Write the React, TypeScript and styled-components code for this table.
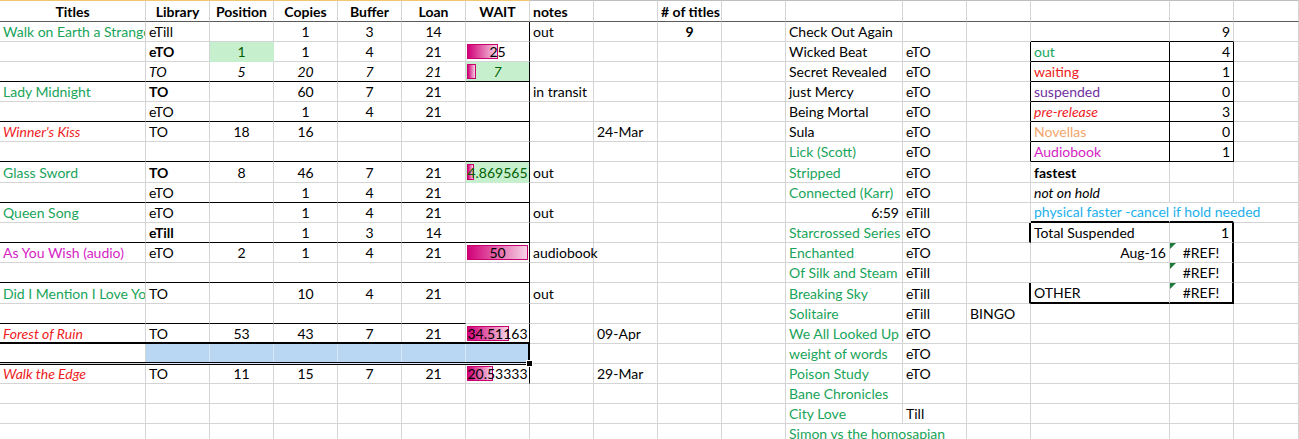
import styled, { createGlobalStyle } from 'styled-components'

const GlobalStyle = createGlobalStyle`
  html, body {
    margin: 0;
    padding: 0;
    background: #fff;
    overflow: hidden;
  }
  body {
    font-family: Lato, 'Open Sans', sans-serif;
    font-size: 14px;
    color: #000;
  }
`

const GRID = '#d4d4d4'
const GREEN = '#19a45a'
const RED = '#ee1c24'
const MAGENTA = '#d424c4'
const PURPLE = '#7030a0'
const ORANGE = '#f3a66a'
const SKY = '#1cb0ec'
const OK_FILL = '#c6efce'
const OK_TEXT = '#006100'
const SELECT_FILL = '#b9d6f2'

const COLS = 'ABCDEFGHIJKLMNOPQ'.split('')
const DEFAULT_ALIGN: Align[] = ['l', 'l', 'c', 'c', 'c', 'c', 'c', 'l', 'l', 'c', 'l', 'l', 'l', 'l', 'l', 'r', 'l']

type Align = 'l' | 'c' | 'r'
type Line = 'thin' | 'thick' | undefined

type Spec = {
  t?: string
  a?: Align
  b?: boolean
  i?: boolean
  c?: string
  fill?: string
  bar?: number
  clip?: boolean
  open?: boolean
  tri?: boolean
}

type RowData = Record<string, Spec | string>

const Sheet = styled.div`
  position: relative;
  width: 1299px;
  display: grid;
  grid-template-columns: 146px repeat(10, 64px) 117px 64px 64px 139px 64px 1fr;
  grid-template-rows: 22px repeat(7, 20px) 21px repeat(5, 20px) 21px repeat(7, 20px);
`

const HeadCell = styled.div<{ $gold: boolean; $align: Align }>`
  box-sizing: border-box;
  display: flex;
  align-items: flex-end;
  justify-content: ${(p) => (p.$align === 'c' ? 'center' : p.$align === 'r' ? 'flex-end' : 'flex-start')};
  padding: 0 3px 1px;
  line-height: 16px;
  font-weight: 700;
  white-space: nowrap;
  border-top: 1px solid ${(p) => (p.$gold ? '#f0c66e' : '#bdbdbd')};
  border-bottom: 1px solid #5a5a5a;
  border-right: 1px solid ${GRID};
`

const lineCss = (line: Line, fallback: string) =>
  line === 'thick' ? '2px solid #000' : line === 'thin' ? '1px solid #000' : `1px solid ${fallback}`

const Cell = styled.div<{
  $align: Align
  $bold?: boolean
  $italic?: boolean
  $color?: string
  $fill?: string
  $clip?: boolean
  $open?: boolean
  $bottom: Line
  $right: Line
  $gridTint: string
}>`
  position: relative;
  box-sizing: border-box;
  min-width: 0;
  display: flex;
  align-items: flex-end;
  justify-content: ${(p) => (p.$align === 'c' ? 'center' : p.$align === 'r' ? 'flex-end' : 'flex-start')};
  padding: 0 3px 1px;
  line-height: 16px;
  white-space: nowrap;
  overflow: ${(p) => (p.$clip ? 'hidden' : 'visible')};
  font-weight: ${(p) => (p.$bold ? 700 : 400)};
  font-style: ${(p) => (p.$italic ? 'italic' : 'normal')};
  color: ${(p) => p.$color || '#000'};
  background: ${(p) => p.$fill || 'transparent'};
  border-bottom: ${(p) => lineCss(p.$bottom, p.$gridTint)};
  border-right: ${(p) => lineCss(p.$right, p.$open ? 'transparent' : p.$gridTint)};
`

const CellText = styled.span`
  position: relative;
  z-index: 1;
`

const Bar = styled.div`
  position: absolute;
  left: 1px;
  top: 2px;
  bottom: 2px;
  box-sizing: border-box;
  border: 1px solid #c8006e;
  background: linear-gradient(to right, #d2007a 0%, #e25ea6 45%, #f6d3e6 100%);
`

const ErrorMark = styled.span`
  position: absolute;
  left: 0;
  top: 0;
  width: 0;
  height: 0;
  border-top: 6px solid #1f7a3a;
  border-right: 6px solid transparent;
`

const Selection = styled.div`
  position: absolute;
  left: -2px;
  top: 342px;
  width: 532px;
  height: 23px;
  box-sizing: border-box;
  border-top: 2px solid #000;
  border-right: 2px solid #000;
  border-bottom: 3px double #000;
  pointer-events: none;
`

const FillHandle = styled.div`
  position: absolute;
  right: -5px;
  bottom: -5px;
  width: 5px;
  height: 5px;
  background: #000;
  border: 1px solid #fff;
`

const headers: { t: string; a: Align }[] = [
  { t: 'Titles', a: 'c' },
  { t: 'Library', a: 'c' },
  { t: 'Position', a: 'c' },
  { t: 'Copies', a: 'c' },
  { t: 'Buffer', a: 'c' },
  { t: 'Loan', a: 'c' },
  { t: 'WAIT', a: 'c' },
  { t: 'notes', a: 'l' },
  { t: '', a: 'l' },
  { t: '# of titles', a: 'l' },
]

const g = (t: string, extra: Spec = {}): Spec => ({ t, c: GREEN, ...extra })
const red = (t: string): Spec => ({ t, c: RED, i: true })

const rows: RowData[] = [
  {
    A: g('Walk on Earth a Strange', { clip: true }), B: 'eTill', D: '1', E: '3', F: '14', H: 'out',
    J: { t: '9', b: true }, L: 'Check Out Again', P: '9',
  },
  {
    B: { t: 'eTO', b: true }, C: { t: '1', fill: OK_FILL, c: OK_TEXT }, D: '1', E: '4', F: '21',
    G: { t: '25', bar: 25 }, L: 'Wicked Beat', M: 'eTO', O: g('out'), P: '4',
  },
  {
    B: { t: 'TO', i: true }, C: { t: '5', i: true }, D: { t: '20', i: true }, E: { t: '7', i: true },
    F: { t: '21', i: true }, G: { t: '7', i: true, bar: 7, fill: OK_FILL, c: OK_TEXT },
    L: 'Secret Revealed', M: 'eTO', O: { t: 'waiting', c: RED }, P: '1',
  },
  {
    A: g('Lady Midnight'), B: { t: 'TO', b: true }, D: '60', E: '7', F: '21', H: 'in transit',
    L: 'just Mercy', M: 'eTO', O: { t: 'suspended', c: PURPLE }, P: '0',
  },
  {
    B: 'eTO', D: '1', E: '4', F: '21', L: 'Being Mortal', M: 'eTO',
    O: { t: 'pre-release', c: RED, i: true }, P: '3',
  },
  {
    A: red("Winner's Kiss"), B: 'TO', C: '18', D: '16', I: '24-Mar', L: 'Sula', M: 'eTO',
    O: { t: 'Novellas', c: ORANGE }, P: '0',
  },
  { L: g('Lick (Scott)'), M: 'eTO', O: { t: 'Audiobook', c: MAGENTA }, P: '1' },
  {
    A: g('Glass Sword'), B: { t: 'TO', b: true }, C: '8', D: '46', E: '7', F: '21',
    G: { t: '4.869565', bar: 4.869565, fill: OK_FILL, c: OK_TEXT }, H: 'out',
    L: g('Stripped'), M: 'eTO', O: { t: 'fastest', b: true },
  },
  {
    B: 'eTO', D: '1', E: '4', F: '21', L: g('Connected (Karr)'), M: 'eTO',
    O: { t: 'not on hold', i: true },
  },
  {
    A: g('Queen Song'), B: 'eTO', D: '1', E: '4', F: '21', H: 'out', L: { t: '6:59', a: 'r' },
    M: 'eTill', O: { t: 'physical faster -cancel if hold needed', c: SKY, open: true }, P: { open: true },
  },
  {
    B: { t: 'eTill', b: true }, D: '1', E: '3', F: '14', L: g('Starcrossed Series'), M: 'eTO',
    O: 'Total Suspended', P: '1',
  },
  {
    A: { t: 'As You Wish (audio)', c: MAGENTA }, B: 'eTO', C: '2', D: '1', E: '4', F: '21',
    G: { t: '50', bar: 50 }, H: 'audiobook', L: g('Enchanted'), M: 'eTO',
    O: { t: 'Aug-16', a: 'r' }, P: { t: '#REF!', a: 'c', tri: true },
  },
  { L: g('Of Silk and Steam'), M: 'eTill', P: { t: '#REF!', a: 'c', tri: true } },
  {
    A: g('Did I Mention I Love You', { clip: true }), B: 'TO', D: '10', E: '4', F: '21', H: 'out',
    L: g('Breaking Sky'), M: 'eTill', O: 'OTHER', P: { t: '#REF!', a: 'c', tri: true },
  },
  { L: g('Solitaire'), M: 'eTill', N: 'BINGO' },
  {
    A: red('Forest of Ruin'), B: 'TO', C: '53', D: '43', E: '7', F: '21',
    G: { t: '34.51163', bar: 34.51163 }, I: '09-Apr', L: g('We All Looked Up'), M: 'eTO',
  },
  {
    B: { fill: SELECT_FILL }, C: { fill: SELECT_FILL }, D: { fill: SELECT_FILL },
    E: { fill: SELECT_FILL }, F: { fill: SELECT_FILL }, G: { fill: SELECT_FILL },
    L: g('weight of words'), M: 'eTO',
  },
  {
    A: red('Walk the Edge'), B: 'TO', C: '11', D: '15', E: '7', F: '21',
    G: { t: '20.53333', bar: 20.53333 }, I: '29-Mar', L: g('Poison Study'), M: 'eTO',
  },
  { L: g('Bane Chronicles') },
  { L: g('City Love'), M: 'Till' },
  { L: g('Simon vs the homosapian', { open: true }) },
]

// black cell borders, row numbers start at 1 under the header
function bottomLine(r: number, col: string): Line {
  const c = COLS.indexOf(col)
  if ([3, 5, 7, 9, 11, 13].includes(r) && c <= 6) return 'thin'
  if (r === 15 && c <= 5) return 'thin'
  if (r >= 1 && r <= 7 && (col === 'O' || col === 'P')) return 'thin'
  if ((r === 10 || r === 14) && (col === 'O' || col === 'P')) return 'thick'
  return undefined
}

function rightLine(r: number, col: string): Line {
  if (col === 'G' && r >= 1 && r <= 18) return 'thin'
  if (r >= 2 && r <= 7 && (col === 'N' || col === 'O' || col === 'P')) return 'thin'
  if ((r === 11 || r === 14) && col === 'N') return 'thick'
  if (r >= 11 && r <= 14 && col === 'P') return 'thick'
  return undefined
}

const barWidth = (v: number) => Math.round((v * 60) / 50) + 1

export default function App() {
  return (
    <>
      <GlobalStyle />
      <Sheet>
        {COLS.map((col, c) => {
          const h = headers[c]
          return (
            <HeadCell key={`h-${col}`} $gold={c <= 6} $align={h ? h.a : 'l'}>
              {h ? h.t : ''}
            </HeadCell>
          )
        })}
        {rows.map((row, ri) =>
          COLS.map((col, c) => {
            const r = ri + 1
            const raw = row[col]
            const spec: Spec = typeof raw === 'string' ? { t: raw } : raw || {}
            const tint = spec.fill === SELECT_FILL ? '#d9e7f7' : spec.fill || GRID
            return (
              <Cell
                key={`${r}-${col}`}
                $align={spec.a || DEFAULT_ALIGN[c]}
                $bold={spec.b}
                $italic={spec.i}
                $color={spec.c}
                $fill={spec.fill}
                $clip={spec.clip}
                $open={spec.open}
                $bottom={bottomLine(r, col)}
                $right={rightLine(r, col)}
                $gridTint={tint}
              >
                {spec.bar !== undefined && <Bar style={{ width: barWidth(spec.bar) }} />}
                {spec.tri && <ErrorMark />}
                {spec.t && <CellText>{spec.t}</CellText>}
              </Cell>
            )
          }),
        )}
        <Selection>
          <FillHandle />
        </Selection>
      </Sheet>
    </>
  )
}
